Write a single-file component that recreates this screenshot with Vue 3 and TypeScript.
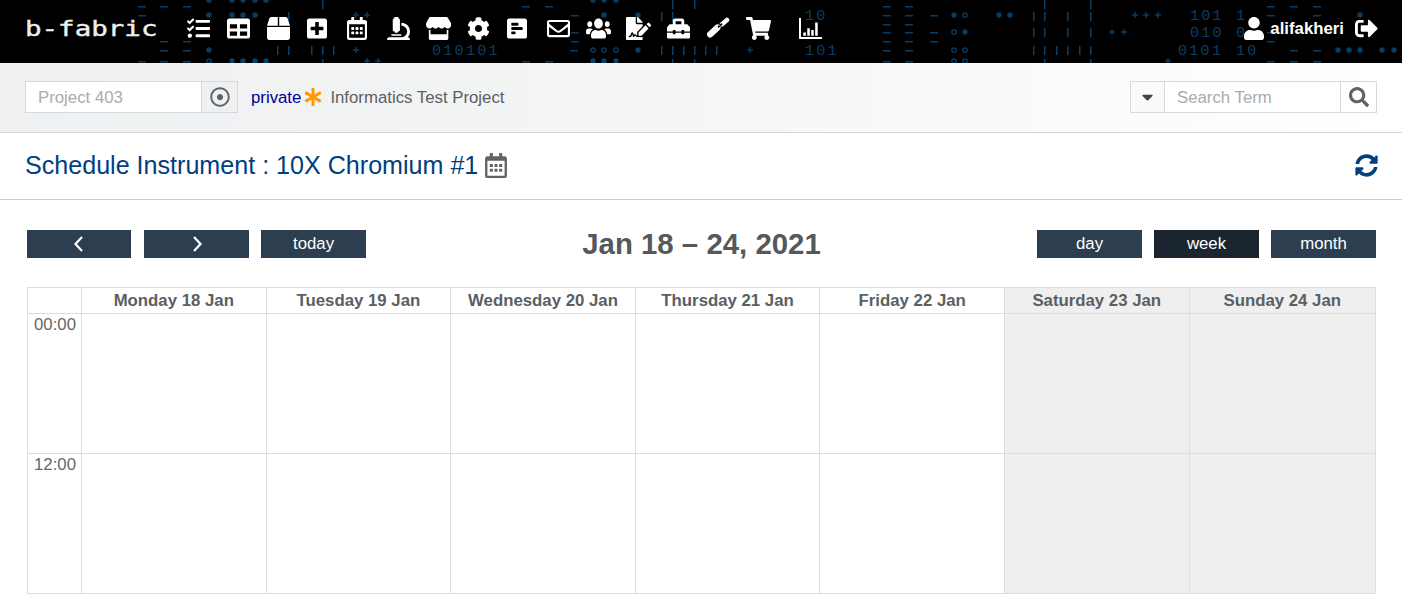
<script setup lang="ts">
// nav icons, drawn in order from the left of the header
const navIcons = [
  { name: 'tasks', w: 23, vb: '0 0 512 512', d: 'M139.61 35.5a12 12 0 0 0-17 0L58.93 98.81l-22.7-22.12a12 12 0 0 0-17 0L3.53 92.41a12 12 0 0 0 0 17l47.59 47.4a12.78 12.78 0 0 0 17.61 0l15.59-15.62L156.52 69a12.09 12.09 0 0 0 .09-17zm0 159.19a12 12 0 0 0-17 0l-63.68 63.72-22.7-22.1a12 12 0 0 0-17 0L3.53 252a12 12 0 0 0 0 17L51 316.5a12.77 12.77 0 0 0 17.6 0l15.7-15.69 72.2-72.22a12 12 0 0 0 .09-16.9zM64 368c-26.49 0-48.59 21.5-48.59 48S37.53 464 64 464a48 48 0 0 0 0-96zm432 16H208a16 16 0 0 0-16 16v32a16 16 0 0 0 16 16h288a16 16 0 0 0 16-16v-32a16 16 0 0 0-16-16zm0-320H208a16 16 0 0 0-16 16v32a16 16 0 0 0 16 16h288a16 16 0 0 0 16-16V80a16 16 0 0 0-16-16zm0 160H208a16 16 0 0 0-16 16v32a16 16 0 0 0 16 16h288a16 16 0 0 0 16-16v-32a16 16 0 0 0-16-16z' },
  { name: 'table', w: 23, vb: '0 0 512 512', d: 'M464 32H48C21.49 32 0 53.49 0 80v352c0 26.51 21.49 48 48 48h416c26.51 0 48-21.49 48-48V80c0-26.51-21.49-48-48-48zM224 416H64v-96h160v96zm0-160H64v-96h160v96zm224 160H288v-96h160v96zm0-160H288v-96h160v96z' },
  { name: 'box', w: 23, vb: '0 0 512 512', d: 'M509.5 184.6L458.9 32.8C452.4 13.2 434.1 0 413.4 0H272v192h238.7c-.4-2.5-.4-5-1.2-7.4zM240 0H98.6c-20.7 0-39 13.2-45.5 32.8L2.5 184.6c-.8 2.4-.8 4.9-1.2 7.4H240V0zM0 224v240c0 26.5 21.5 48 48 48h416c26.5 0 48-21.5 48-48V224H0z' },
  { name: 'plus-square', w: 20, vb: '0 0 448 512', d: 'M400 32H48C21.5 32 0 53.5 0 80v352c0 26.5 21.5 48 48 48h352c26.5 0 48-21.5 48-48V80c0-26.5-21.5-48-48-48zm-32 252c0 6.6-5.4 12-12 12h-92v92c0 6.6-5.4 12-12 12h-56c-6.6 0-12-5.4-12-12v-92H92c-6.6 0-12-5.4-12-12v-56c0-6.6 5.4-12 12-12h92v-92c0-6.6 5.4-12 12-12h56c6.6 0 12 5.4 12 12v92h92c6.6 0 12 5.4 12 12v56z' },
  { name: 'calendar', w: 20, vb: '0 0 448 512', d: 'M148 288h-40c-6.6 0-12-5.4-12-12v-40c0-6.6 5.4-12 12-12h40c6.6 0 12 5.4 12 12v40c0 6.6-5.4 12-12 12zm108-12v-40c0-6.6-5.4-12-12-12h-40c-6.6 0-12 5.4-12 12v40c0 6.6 5.4 12 12 12h40c6.6 0 12-5.4 12-12zm96 0v-40c0-6.6-5.4-12-12-12h-40c-6.6 0-12 5.4-12 12v40c0 6.6 5.4 12 12 12h40c6.6 0 12-5.4 12-12zm-96 96v-40c0-6.6-5.4-12-12-12h-40c-6.6 0-12 5.4-12 12v40c0 6.6 5.4 12 12 12h40c6.6 0 12-5.4 12-12zm-96 0v-40c0-6.6-5.4-12-12-12h-40c-6.6 0-12 5.4-12 12v40c0 6.6 5.4 12 12 12h40c6.6 0 12-5.4 12-12zm192 0v-40c0-6.6-5.4-12-12-12h-40c-6.6 0-12 5.4-12 12v40c0 6.6 5.4 12 12 12h40c6.6 0 12-5.4 12-12zm96-260v352c0 26.5-21.5 48-48 48H48c-26.5 0-48-21.5-48-48V112c0-26.5 21.5-48 48-48h48V12c0-6.6 5.4-12 12-12h40c6.6 0 12 5.4 12 12v52h128V12c0-6.6 5.4-12 12-12h40c6.6 0 12 5.4 12 12v52h48c26.5 0 48 21.5 48 48zm-48 346V160H48v298c0 3.3 2.7 6 6 6h340c3.3 0 6-2.7 6-6z' },
  { name: 'microscope', w: 23, vb: '0 0 512 512', d: 'M160 320h12v16c0 8.84 7.16 16 16 16h40c8.84 0 16-7.16 16-16v-16h12c17.67 0 32-14.33 32-32V64c0-17.67-14.33-32-32-32V16c0-8.84-7.16-16-16-16h-64c-8.84 0-16 7.16-16 16v16c-17.67 0-32 14.33-32 32v224c0 17.67 14.33 32 32 32zm304 128h-1.29C493.24 413.99 512 369.2 512 320c0-105.88-86.12-192-192-192v64c70.58 0 128 57.42 128 128s-57.42 128-128 128H48c-26.51 0-48 21.49-48 48 0 8.84 7.16 16 16 16h480c8.84 0 16-7.16 16-16 0-26.51-21.49-48-48-48zm-360-32h208c4.42 0 8-3.58 8-8v-16c0-4.42-3.58-8-8-8H104c-4.42 0-8 3.58-8 8v16c0 4.42 3.58 8 8 8z' },
  { name: 'store', w: 25, vb: '0 0 616 512', d: 'M602 118.6L537.1 15C531.3 5.7 521 0 510 0H106C95 0 84.7 5.7 78.9 15L14 118.6c-33.9 54.1-3.8 129.3 59.6 137.9 4.6.6 9.1.9 13.7.9 29.9 0 56.4-13.2 74.6-33.6 18.2 20.4 44.8 33.6 74.6 33.6 29.9 0 56.4-13.2 74.6-33.6 18.2 20.4 44.8 33.6 74.6 33.6 29.9 0 56.4-13.2 74.6-33.6 18.2 20.4 44.8 33.6 74.6 33.6 4.7 0 9.2-.3 13.7-.9 63.6-8.5 93.7-83.7 59.8-137.8zM530 288c-6.6 0-13.1-1-19.4-2.5V384h-400v-98.5c-6.3 1.4-12.8 2.5-19.4 2.5-4 0-8.1-.3-12-.8-3.1-.4-6.1-1.1-9-1.9V480c0 17.7 14.3 32 32 32h416c17.7 0 32-14.3 32-32V285.3c-3 .8-6 1.5-9 1.9-4.1.5-8.1.8-12.2.8z' },
  { name: 'cog', w: 23, vb: '0 0 512 512', d: 'M487.4 315.7l-42.6-24.6c4.3-23.2 4.3-47 0-70.2l42.6-24.6c4.9-2.8 7.1-8.6 5.5-14-11.1-35.6-30-67.8-54.7-94.6-3.8-4.1-10-5.1-14.8-2.3L380.8 110c-17.9-15.4-38.5-27.3-60.8-35.1V25.8c0-5.6-3.9-10.5-9.4-11.7-36.7-8.2-74.3-7.8-109.2 0-5.5 1.2-9.4 6.1-9.4 11.7V75c-22.2 7.9-42.8 19.8-60.8 35.1L88.7 85.5c-4.9-2.8-11-1.9-14.8 2.3-24.7 26.7-43.6 58.9-54.7 94.6-1.7 5.4.6 11.2 5.5 14L67.3 221c-4.3 23.2-4.3 47 0 70.2l-42.6 24.6c-4.9 2.8-7.1 8.6-5.5 14 11.1 35.6 30 67.8 54.7 94.6 3.8 4.1 10 5.1 14.8 2.3l42.6-24.6c17.9 15.4 38.5 27.3 60.8 35.1v49.2c0 5.6 3.9 10.5 9.4 11.7 36.7 8.2 74.3 7.8 109.2 0 5.5-1.2 9.4-6.1 9.4-11.7v-49.2c22.2-7.9 42.8-19.8 60.8-35.1l42.6 24.6c4.9 2.8 11 1.9 14.8-2.3 24.7-26.7 43.6-58.9 54.7-94.6 1.5-5.5-.7-11.3-5.6-14.1zM256 336c-44.1 0-80-35.9-80-80s35.9-80 80-80 80 35.9 80 80-35.9 80-80 80z' },
  { name: 'poll-h', w: 20, vb: '0 0 448 512', d: 'M448 432V80c0-26.5-21.5-48-48-48H48C21.5 32 0 53.5 0 80v352c0 26.5 21.5 48 48 48h352c26.5 0 48-21.5 48-48zM112 192c-8.84 0-16-7.16-16-16v-32c0-8.84 7.16-16 16-16h128c8.84 0 16 7.16 16 16v32c0 8.84-7.16 16-16 16H112zm0 96c-8.84 0-16-7.16-16-16v-32c0-8.84 7.16-16 16-16h224c8.84 0 16 7.16 16 16v32c0 8.84-7.16 16-16 16H112zm0 96c-8.84 0-16-7.16-16-16v-32c0-8.84 7.16-16 16-16h64c8.84 0 16 7.16 16 16v32c0 8.84-7.16 16-16 16h-64z' },
  { name: 'envelope', w: 23, vb: '0 0 512 512', d: 'M464 64H48C21.49 64 0 85.49 0 112v288c0 26.51 21.49 48 48 48h416c26.51 0 48-21.49 48-48V112c0-26.51-21.49-48-48-48zm0 48v40.805c-22.422 18.259-58.168 46.651-134.587 106.49-16.841 13.247-50.201 45.072-73.413 44.701-23.208.375-56.579-31.459-73.413-44.701C106.18 199.465 70.425 171.067 48 152.805V112h416zM48 400V214.398c22.914 18.251 55.409 43.862 104.938 82.646 21.857 17.205 60.134 55.186 103.062 54.955 42.717.231 80.509-37.199 103.053-54.947 49.528-38.783 82.032-64.401 104.947-82.653V400H48z' },
  { name: 'users', w: 25, vb: '0 0 640 512', d: 'M96 224c35.3 0 64-28.7 64-64s-28.7-64-64-64-64 28.7-64 64 28.7 64 64 64zm448 0c35.3 0 64-28.7 64-64s-28.7-64-64-64-64 28.7-64 64 28.7 64 64 64zm32 32h-64c-17.6 0-33.5 7.1-45.1 18.6 40.3 22.1 68.9 62 75.1 109.4h66c17.7 0 32-14.3 32-32v-32c0-35.3-28.7-64-64-64zm-256 0c61.9 0 112-50.1 112-112S381.9 32 320 32 208 82.1 208 144s50.1 112 112 112zm76.8 32h-8.3c-20.8 10-43.9 16-68.5 16s-47.6-6-68.5-16h-8.3C179.6 288 128 339.6 128 403.2V432c0 26.5 21.5 48 48 48h288c26.5 0 48-21.5 48-48v-28.8c0-63.6-51.6-115.2-115.2-115.2zm-223.7-13.4C161.5 263.1 145.6 256 128 256H64c-35.3 0-64 28.7-64 64v32c0 17.7 14.3 32 32 32h65.9c6.3-47.4 34.9-87.3 75.2-109.4z' },
  { name: 'file-signature', w: 25, vb: '0 0 576 512', d: 'M218.17 424.14c-2.95-5.92-8.09-6.52-10.17-6.52s-7.22.59-10.02 6.19l-7.67 15.34c-6.37 12.78-25.03 11.37-29.48-2.09L144 386.59l-10.61 31.88c-5.89 17.66-22.38 29.53-41 29.53H80c-8.84 0-16-7.16-16-16s7.16-16 16-16h12.39c4.83 0 9.11-3.08 10.64-7.66l18.19-54.64c3.3-9.81 12.44-16.41 22.78-16.41s19.48 6.59 22.77 16.41l13.88 41.64c19.75-16.19 54.06-9.7 66 14.16 1.89 3.78 5.49 5.95 9.36 6.26v-82.12l128-127.09V160H248c-13.2 0-24-10.8-24-24V0H24C10.7 0 0 10.7 0 24v464c0 13.3 10.7 24 24 24h336c13.3 0 24-10.7 24-24v-40l-128-.11c-16.12-.31-30.58-9.28-37.83-23.75zM384 121.9c0-6.3-2.5-12.4-7-16.9L279.1 7c-4.5-4.5-10.6-7-17-7H256v128h128v-6.1zm-96 225.06V416h68.99l161.68-162.78-67.88-67.88L288 346.96zm280.54-179.63l-31.87-31.87c-9.94-9.94-26.07-9.94-36.01 0l-27.25 27.25 67.88 67.88 27.25-27.25c9.95-9.94 9.95-26.07 0-36.01z' },
  { name: 'toolbox', w: 23, vb: '0 0 512 512', d: 'M502.63 214.63l-45.25-45.25c-6-6-14.14-9.37-22.63-9.37H384V80c0-26.51-21.49-48-48-48H176c-26.51 0-48 21.49-48 48v80H77.25c-8.49 0-16.62 3.37-22.63 9.37L9.37 214.63c-6 6-9.37 14.14-9.37 22.63V320h128v-16c0-8.84 7.16-16 16-16h32c8.84 0 16 7.16 16 16v16h128v-16c0-8.84 7.16-16 16-16h32c8.84 0 16 7.16 16 16v16h128v-82.75c0-8.48-3.37-16.62-9.37-22.62zM320 160H192V96h128v64zm64 208c0 8.84-7.16 16-16 16h-32c-8.84 0-16-7.16-16-16v-16H192v16c0 8.84-7.16 16-16 16h-32c-8.84 0-16-7.16-16-16v-16H0v96c0 17.67 14.33 32 32 32h448c17.67 0 32-14.33 32-32v-96H384v16z' },
  { name: 'brush', w: 23, vb: '0 0 23 23', d: 'M5.2 19.87L12.7 12.87A3.25 3.25 0 0 0 8.3 8.13L.8 15.13A3.25 3.25 0 0 0 5.2 19.87zM10.5 9.5L14.5 6L15.5 7.5L11.5 11zM16.44 8.93L21.44 4.73A2.25 2.25 0 0 0 18.56 1.27L13.56 5.47A2.25 2.25 0 0 0 16.44 8.93z' },
  { name: 'cart', w: 25, vb: '0 0 576 512', d: 'M528.12 301.319l47.273-208C578.806 78.301 567.391 64 551.99 64H159.208l-9.166-44.81C147.758 8.021 137.93 0 126.529 0H24C10.745 0 0 10.745 0 24v16c0 13.255 10.745 24 24 24h69.883l70.248 343.435C147.325 417.1 136 435.222 136 456c0 30.928 25.072 56 56 56s56-25.072 56-56c0-15.674-6.447-29.835-16.824-40h209.647C430.447 426.165 424 440.326 424 456c0 30.928 25.072 56 56 56s56-25.072 56-56c0-22.172-12.888-41.332-31.579-50.405l5.517-24.276c3.413-15.018-8.002-29.319-23.403-29.319H218.117l-6.545-32h293.145c11.206 0 20.92-7.754 23.403-18.681z' },
]

const chartPath = 'M0 0h44v420h468v44H16a16 16 0 0 1-16-16zM96 320h56v72H96zM184 224h56v168h-56zM272 264h56v128h-56zM360 96h56v296h-56z'

// the faint binary pattern behind the header
type Mark = [number, number]
const dashes: Mark[] = [
  [138, 6], [160, 6], [183, 6], [138, 15], [160, 41], [183, 41], [160, 50], [183, 50], [138, 61], [160, 61], [183, 61],
  [522, 6], [545, 6], [571, 15], [571, 32], [571, 41], [570, 50], [522, 61], [545, 61],
  [883, 6], [905, 6], [883, 15], [905, 15], [883, 24], [905, 24], [883, 32], [905, 32], [883, 41], [905, 41], [883, 50], [905, 50], [883, 61], [905, 61],
  [930, 15], [930, 32], [930, 41],
  [1267, 6], [1290, 6], [1313, 6], [1267, 15], [1313, 15], [1267, 32], [1267, 41], [1290, 50], [1313, 50], [1267, 61], [1290, 61], [1313, 61],
]
const bars: Mark[] = [
  [288, 12], [322, 0], [277, 46], [288, 46], [311, 46], [322, 46], [333, 46], [322, 59],
  [661, 12], [672, 12], [694, 0], [672, 0], [661, 46], [672, 46], [683, 46], [694, 46], [705, 46], [716, 46], [672, 59], [694, 59],
  [1033, 12], [1044, 12], [1067, 12], [1090, 12], [1033, 28], [1044, 28], [1067, 28], [1090, 28],
  [1033, 46], [1044, 46], [1056, 46], [1067, 46], [1079, 46], [1090, 46], [1044, 59], [1090, 59], [1044, 0], [1090, 0],
]
const dots: Mark[] = [
  [209, 15], [232, 15], [243, 15], [255, 15], [209, 50], [232, 61], [243, 61], [255, 61], [266, 61],
  [209, 0], [232, 0], [243, 0], [255, 0], [266, 0], [593, 0], [604, 0], [616, 0],
  [604, 15], [638, 15], [638, 50], [593, 61], [604, 61], [616, 61],
  [954, 15], [999, 15], [1010, 15], [965, 32], [1360, 15], [1338, 50], [1349, 50], [1360, 50], [1382, 50], [1394, 50],
]
const rings: Mark[] = [[209, 61], [593, 50], [604, 50], [616, 50], [965, 15], [954, 32], [954, 50], [965, 50], [954, 61], [965, 61]]
const labels = [
  { x: 432, y: 55, t: '010101' }, { x: 805, y: 20, t: '10' }, { x: 805, y: 55, t: '101' },
  { x: 1190, y: 20, t: '101' }, { x: 1236, y: 20, t: '1' }, { x: 1190, y: 37, t: '010' }, { x: 1236, y: 37, t: '0' },
  { x: 1178, y: 55, t: '0101' }, { x: 1236, y: 55, t: '10' },
]
const plus: Mark[] = [
  [356, 15], [367, 15], [356, 50], [367, 61], [378, 61], [750, 50],
  [1135, 15], [1146, 15], [1158, 15], [1112, 32], [1124, 32], [1168, 61],
]

const days = [
  { label: 'Monday 18 Jan', weekend: false },
  { label: 'Tuesday 19 Jan', weekend: false },
  { label: 'Wednesday 20 Jan', weekend: false },
  { label: 'Thursday 21 Jan', weekend: false },
  { label: 'Friday 22 Jan', weekend: false },
  { label: 'Saturday 23 Jan', weekend: true },
  { label: 'Sunday 24 Jan', weekend: true },
]
const hours = ['00:00', '12:00']

const calendarPath = navIcons[4].d
</script>

<template>
  <div class="page">
    <header class="topbar">
      <svg class="pattern" width="1402" height="63" aria-hidden="true">
        <rect v-for="(m, i) in dashes" :key="'da' + i" :x="m[0]" :y="m[1]" width="8" height="1.5" />
        <rect v-for="(m, i) in bars" :key="'ba' + i" :x="m[0]" :y="m[1]" width="1.5" height="9" />
        <circle v-for="(m, i) in dots" :key="'do' + i" :cx="m[0]" :cy="m[1]" r="2.7" />
        <circle v-for="(m, i) in rings" :key="'ri' + i" class="ring" :cx="m[0]" :cy="m[1]" r="2.2" />
        <text v-for="(l, i) in labels" :key="'la' + i" :x="l.x" :y="l.y">{{ l.t }}</text>
        <g v-for="(m, i) in plus" :key="'pl' + i">
          <rect :x="m[0] - 3" :y="m[1] - 0.7" width="6" height="1.4" />
          <rect :x="m[0] - 0.7" :y="m[1] - 3" width="1.4" height="6" />
        </g>
      </svg>
      <div class="logo-slot"><span class="logo">b-fabric</span></div>
      <nav class="nav">
        <a v-for="icon in navIcons" :key="icon.name" class="nav-item" :class="{ narrow: icon.w === 20 }">
          <svg :viewBox="icon.vb" :width="icon.w" height="23" preserveAspectRatio="none"><path :d="icon.d" /></svg>
        </a>
        <a class="nav-item chart">
          <svg viewBox="0 0 512 464" width="23" height="21"><path :d="chartPath" /></svg>
        </a>
      </nav>
      <div class="user">
        <svg viewBox="0 0 448 512" width="20" height="23">
          <path d="M224 256c70.7 0 128-57.3 128-128S294.7 0 224 0 96 57.3 96 128s57.3 128 128 128zm89.6 32h-16.7c-22.2 10.2-46.9 16-72.9 16s-50.6-5.8-72.9-16h-16.7C60.2 288 0 348.2 0 422.4V464c0 26.5 21.5 48 48 48h352c26.5 0 48-21.5 48-48v-41.6c0-74.2-60.2-134.4-134.4-134.4z" />
        </svg>
        <span class="user-name">alifakheri</span>
        <svg class="logout" viewBox="0 0 512 512" width="23" height="23">
          <path d="M497 273L329 441c-15 15-41 4.5-41-17v-96H152c-13.3 0-24-10.7-24-24v-96c0-13.3 10.7-24 24-24h136V88c0-21.4 25.9-32 41-17l168 168c9.3 9.4 9.3 24.6 0 34zM192 436v-40c0-6.6-5.4-12-12-12H96c-17.7 0-32-14.3-32-32V160c0-17.7 14.3-32 32-32h84c6.6 0 12-5.4 12-12V76c0-6.6-5.4-12-12-12H96c-53 0-96 43-96 96v192c0 53 43 96 96 96h84c6.6 0 12-5.4 12-12z" />
        </svg>
      </div>
    </header>

    <section class="subbar">
      <div class="field project">
        <input class="field-input" placeholder="Project 403" />
        <span class="addon grey">
          <svg viewBox="0 0 512 512" width="20" height="20">
            <path d="M256 56c110.532 0 200 89.451 200 200 0 110.532-89.451 200-200 200-110.532 0-200-89.451-200-200 0-110.532 89.451-200 200-200m0-48C119.033 8 8 119.033 8 256s111.033 248 248 248 248-111.033 248-248S392.967 8 256 8zm0 168c-44.183 0-80 35.817-80 80s35.817 80 80 80 80-35.817 80-80-35.817-80-80-80z" />
          </svg>
        </span>
      </div>
      <a class="private">private</a>
      <svg class="asterisk" viewBox="0 0 512 512" width="18" height="18">
        <path d="M478.21 334.093L336 256l142.21-78.093c11.795-6.477 15.961-21.384 9.232-33.037l-19.48-33.741c-6.728-11.653-21.72-15.499-33.227-8.523L296 186.718l3.475-162.204C299.763 11.061 288.937 0 275.48 0h-38.96c-13.456 0-24.283 11.061-23.994 24.514L216 186.718 77.265 102.607c-11.506-6.976-26.499-3.13-33.227 8.523l-19.48 33.741c-6.728 11.653-2.562 26.56 9.233 33.037L176 256 33.79 334.093c-11.795 6.477-15.961 21.384-9.232 33.037l19.48 33.741c6.728 11.653 21.721 15.499 33.227 8.523L216 325.282l-3.475 162.204C212.237 500.939 223.064 512 236.52 512h38.961c13.456 0 24.283-11.061 23.994-24.514L296 325.282l138.735 84.111c11.506 6.976 26.499 3.13 33.227-8.523l19.48-33.741c6.728-11.653 2.563-26.559-9.232-33.036z" />
      </svg>
      <span class="project-name">Informatics Test Project</span>
      <div class="field search">
        <span class="addon caret">
          <svg viewBox="0 0 320 512" width="11" height="18">
            <path d="M31.3 192h257.3c17.8 0 26.7 21.5 14.1 34.1L174.1 354.8c-7.8 7.8-20.5 7.8-28.3 0L17.2 226.1C4.6 213.5 13.5 192 31.3 192z" />
          </svg>
        </span>
        <input class="field-input" placeholder="Search Term" />
        <span class="addon search-btn">
          <svg viewBox="0 0 512 512" width="20" height="20">
            <path d="M505 442.7L405.3 343c-4.5-4.5-10.6-7-17-7H372c27.6-35.3 44-79.7 44-128C416 93.1 322.9 0 208 0S0 93.1 0 208s93.1 208 208 208c48.3 0 92.7-16.4 128-44v16.3c0 6.4 2.5 12.5 7 17l99.7 99.7c9.4 9.4 24.6 9.4 33.9 0l28.3-28.3c9.4-9.4 9.4-24.6.1-34zM208 336c-70.7 0-128-57.2-128-128 0-70.7 57.2-128 128-128 70.7 0 128 57.2 128 128 0 70.7-57.2 128-128 128z" />
          </svg>
        </span>
      </div>
    </section>

    <section class="title-row">
      <h1 class="title">Schedule Instrument : 10X Chromium #1</h1>
      <svg class="title-cal" viewBox="0 0 448 512" width="22" height="25"><path :d="calendarPath" /></svg>
      <svg class="sync" viewBox="0 0 512 512" width="23" height="23">
        <path d="M370.72 133.28C339.458 104.008 298.888 87.962 255.848 88c-77.458.068-144.328 53.178-162.791 126.85-1.344 5.363-6.122 9.15-11.651 9.15H24.103c-7.498 0-13.194-6.807-11.807-14.176C33.933 94.924 134.813 8 256 8c66.448 0 126.791 26.136 171.315 68.685L463.03 40.97C478.149 25.851 504 36.559 504 57.941V192c0 13.255-10.745 24-24 24H345.941c-21.382 0-32.09-25.851-16.971-40.971l41.75-41.749zM32 296h134.059c21.382 0 32.09 25.851 16.971 40.971l-41.75 41.75c31.262 29.273 71.835 45.319 114.876 45.28 77.418-.07 144.315-53.144 162.787-126.849 1.344-5.363 6.122-9.15 11.651-9.15h57.304c7.498 0 13.194 6.807 11.807 14.176C478.067 417.076 377.187 504 256 504c-66.448 0-126.791-26.136-171.315-68.685L48.97 471.03C33.851 486.149 8 475.441 8 454.059V320c0-13.255 10.745-24 24-24z" />
      </svg>
    </section>

    <main class="schedule">
      <div class="toolbar">
        <div class="btn-group">
          <button class="btn prev">
            <svg viewBox="0 0 10 16" width="10" height="16"><path d="M8 1L1.5 8 8 15" /></svg>
          </button>
          <button class="btn">
            <svg viewBox="0 0 10 16" width="10" height="16"><path d="M2 1l6.5 7L2 15" /></svg>
          </button>
          <button class="btn">today</button>
        </div>
        <h2 class="range">Jan 18 – 24, 2021</h2>
        <div class="btn-group views">
          <button class="btn">day</button>
          <button class="btn active">week</button>
          <button class="btn">month</button>
        </div>
      </div>

      <div class="calendar">
        <div class="cell head time-col"></div>
        <div v-for="day in days" :key="day.label" class="cell head" :class="{ weekend: day.weekend }">{{ day.label }}</div>
        <template v-for="(hour, h) in hours" :key="hour">
          <div class="cell time-col hour" :class="{ last: h === 1 }">{{ hour }}</div>
          <div v-for="day in days" :key="day.label + hour" class="cell" :class="{ weekend: day.weekend, last: h === 1 }"></div>
        </template>
      </div>
    </main>
  </div>
</template>

<style>
html, body {
  margin: 0;
  background: #fff;
}
</style>

<style scoped>
.page {
  width: 1402px;
  height: 608px;
  overflow: hidden;
  font-family: "Liberation Sans", Arial, sans-serif;
  font-size: 16.8px;
  color: #5a5f64;
}

.topbar {
  position: relative;
  display: flex;
  align-items: center;
  box-sizing: border-box;
  height: 63px;
  padding: 0 24px 6px 25px;
  background: #000;
}

.pattern {
  position: absolute;
  left: 0;
  top: 0;
  fill: #0b3d63;
}

.pattern .ring {
  fill: none;
  stroke: #0b3d63;
  stroke-width: 1.3;
}

.pattern text {
  font-family: "Liberation Mono", monospace;
  font-size: 15px;
  letter-spacing: 2.3px;
}

.logo-slot {
  position: relative;
  width: 153px;
}

.logo {
  display: inline-block;
  font-family: "DejaVu Sans Mono", monospace;
  font-size: 21px;
  color: #eee;
  white-space: nowrap;
  -webkit-text-stroke: 0.4px #eee;
  transform: scaleX(1.31);
  transform-origin: left center;
}

.nav {
  position: relative;
  display: flex;
  align-items: center;
}

.nav-item {
  display: flex;
  justify-content: center;
  width: 40px;
}

.nav-item svg {
  fill: #fff;
}

.nav-item.narrow svg {
  margin-left: -2px;
}

.nav-item.chart {
  margin-left: 12px;
}

.user {
  position: relative;
  display: flex;
  align-items: center;
  margin-left: auto;
  color: #fff;
}

.user svg {
  fill: #fff;
}

.user-name {
  margin-left: 6px;
  font-weight: 700;
}

.logout {
  margin-left: 11px;
}

.subbar {
  display: flex;
  align-items: center;
  box-sizing: border-box;
  height: 70px;
  padding: 0 25px 1px;
  border-bottom: 1px solid #d4d6d9;
  background: linear-gradient(90deg, #eff0f1 0%, #f3f4f4 40%, #ffffff 100%);
}

.field {
  display: flex;
  box-sizing: border-box;
  height: 32px;
  border: 1px solid #d5d8dc;
}

.field-input {
  box-sizing: border-box;
  min-width: 0;
  height: 100%;
  padding: 2px 12px 0;
  border: 0;
  outline: 0;
  background: #fff;
  font: inherit;
  color: #5a5f64;
}

.field-input::placeholder {
  color: #a8acb1;
  opacity: 1;
}

.addon {
  display: flex;
  align-items: center;
  justify-content: center;
  box-sizing: border-box;
}

.addon svg {
  fill: #5f6265;
}

.project {
  width: 213px;
}

.project .field-input {
  width: 175px;
}

.project .addon {
  width: 36px;
  border-left: 1px solid #d5d8dc;
  background: #eff0f1;
}

.private {
  margin-left: 13px;
  padding-top: 2px;
  color: #00009c;
}

.asterisk {
  margin-left: 3px;
  fill: #ff9900;
}

.project-name {
  margin-left: 8px;
  padding-top: 2px;
}

.search {
  width: 247px;
  margin-left: auto;
}

.search .caret {
  width: 34px;
  border-right: 1px solid #d5d8dc;
  background: #fafafa;
}

.search .caret svg {
  fill: #444;
}

.search .field-input {
  width: 175px;
}

.search .search-btn {
  width: 36px;
  border-left: 1px solid #d5d8dc;
  background: #fff;
}

.title-row {
  display: flex;
  align-items: center;
  box-sizing: border-box;
  height: 67px;
  padding: 0 24px 2px 25px;
  border-bottom: 1px solid #ccc;
}

.title {
  margin: 0;
  font-size: 25.1px;
  font-weight: 400;
  color: #004080;
}

.title-cal {
  margin-left: 7px;
  fill: #5f6368;
}

.sync {
  margin-left: auto;
  fill: #004080;
}

.schedule {
  padding: 30px 26px 0 27px;
}

.toolbar {
  display: flex;
  align-items: center;
  justify-content: space-between;
  height: 28px;
}

.btn-group {
  display: flex;
  gap: 12px;
}

.btn {
  display: flex;
  align-items: center;
  justify-content: center;
  width: 105px;
  height: 28px;
  padding: 0;
  border: 0;
  background: #2c3e50;
  font: inherit;
  color: #fff;
}

.btn.prev {
  width: 104px;
  margin-right: 1px;
}

.btn svg {
  fill: none;
  stroke: #fff;
  stroke-width: 2.2;
}

.btn.active {
  background: #1a252f;
}

.range {
  margin: 0;
  font-size: 29.4px;
  font-weight: 700;
  color: #55595c;
}

.calendar {
  display: grid;
  grid-template-columns: 54px repeat(6, 184.6px) 1fr;
  grid-template-rows: 26px 140px 139px;
  box-sizing: border-box;
  width: 1349px;
  margin-top: 29px;
  border: 1px solid #ddd;
}

.cell {
  box-sizing: border-box;
  border-right: 1px solid #ddd;
  border-bottom: 1px solid #ddd;
}

.cell:nth-child(8n) {
  border-right: 0;
}

.cell.last {
  border-bottom: 0;
}

.head {
  font-weight: 700;
  line-height: 25px;
  text-align: center;
}

.weekend {
  background: #efefef;
}

.hour {
  padding: 2px 5px 0 0;
  line-height: 18px;
  text-align: right;
  color: #666;
}
</style>
